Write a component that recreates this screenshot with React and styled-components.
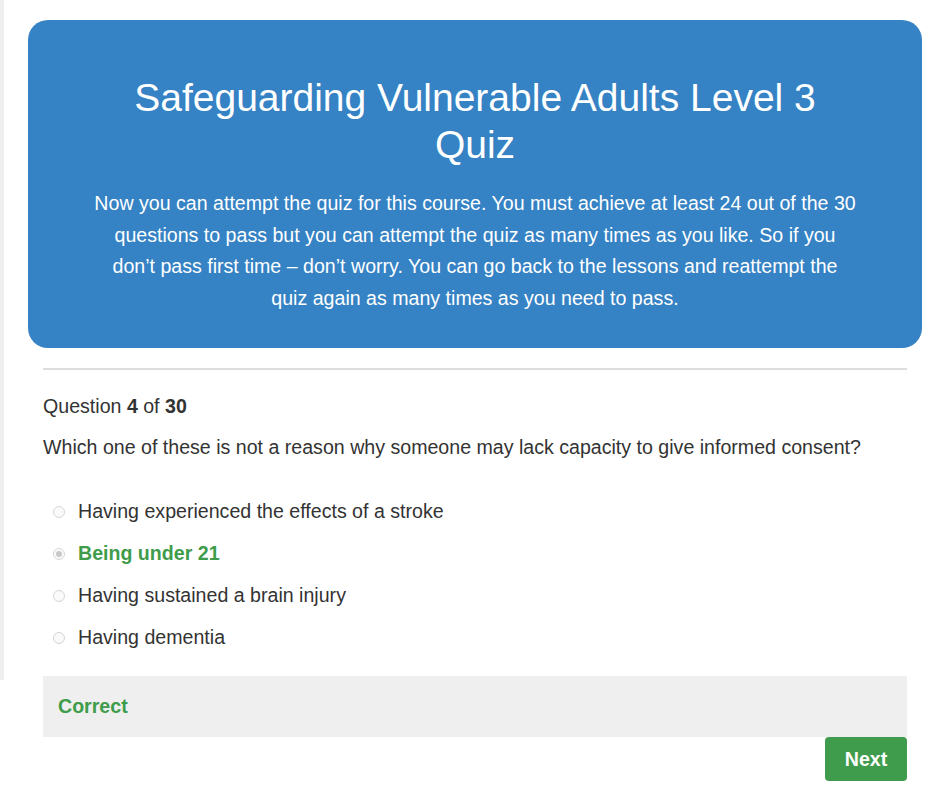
import React from 'react'
import styled, { createGlobalStyle } from 'styled-components'

const GlobalStyle = createGlobalStyle`
  html, body {
    margin: 0;
    padding: 0;
    background: #fff;
  }
  body {
    font-family: "Liberation Sans", Arial, sans-serif;
    color: #333;
  }
`

const Page = styled.div`
  display: flex;
  align-items: flex-start;
  width: 940px;
`

const SideEdge = styled.div`
  width: 4px;
  height: 680px;
  background: #efefef;
  flex-shrink: 0;
`

const Main = styled.div`
  width: 864px;
  margin-left: 39px;
  padding-top: 20px;
`

const Banner = styled.div`
  margin: 0 -15px;
  background: #3582c4;
  border-radius: 20px;
  color: #fff;
  text-align: center;
  padding: 54px 64px 33px;
`

const Title = styled.h1`
  margin: 0 0 20px;
  padding: 0 38px;
  font-size: 39px;
  line-height: 47px;
  font-weight: 400;
`

const Intro = styled.p`
  margin: 0;
  font-size: 19.6px;
  line-height: 31.7px;
`

const Divider = styled.hr`
  border: 0;
  height: 2px;
  background: #ddd;
  margin: 20px 0 0;
`

const Counter = styled.div`
  margin-top: 24px;
  font-size: 19.6px;
  line-height: 24px;
  b {
    font-weight: 700;
  }
`

const QuestionText = styled.div`
  margin-top: 17px;
  font-size: 19.6px;
  line-height: 24px;
`

const Options = styled.ul`
  list-style: none;
  margin: 32px 0 0;
  padding: 0 0 0 10px;
`

const Option = styled.li`
  display: flex;
  align-items: center;
  height: 42px;
  font-size: 19.6px;
  color: ${p => (p.correct ? '#3f9c4b' : '#333')};
  font-weight: ${p => (p.correct ? 700 : 400)};
`

const Radio = styled.span`
  width: 12px;
  height: 12px;
  border-radius: 50%;
  border: 1px solid #d6d6d6;
  background: #fafafa;
  margin-right: 13px;
  flex-shrink: 0;
  box-sizing: border-box;
  display: flex;
  align-items: center;
  justify-content: center;
  &::after {
    content: '';
    display: ${p => (p.checked ? 'block' : 'none')};
    width: 6px;
    height: 6px;
    border-radius: 50%;
    background: #c8c8c8;
  }
`

const Feedback = styled.div`
  margin-top: 17px;
  background: #efefef;
  height: 61px;
  display: flex;
  align-items: center;
  padding-left: 15px;
  color: #3f9c4b;
  font-weight: 700;
  font-size: 19.6px;
`

const Actions = styled.div`
  display: flex;
  justify-content: flex-end;
`

const NextButton = styled.button`
  background: #3f9c4c;
  color: #fff;
  border: 0;
  border-radius: 4px;
  width: 82px;
  height: 44px;
  padding: 2px 0 0;
  font-family: inherit;
  font-weight: 700;
  font-size: 19.6px;
  cursor: pointer;
`

const answers = [
  { text: 'Having experienced the effects of a stroke' },
  { text: 'Being under 21', correct: true },
  { text: 'Having sustained a brain injury' },
  { text: 'Having dementia' },
]

export default function App() {
  return (
    <>
      <GlobalStyle />
      <Page>
        <SideEdge />
        <Main>
          <Banner>
            <Title>Safeguarding Vulnerable Adults Level 3 Quiz</Title>
            <Intro>
              Now you can attempt the quiz for this course. You must achieve at least 24 out of the 30
              questions to pass but you can attempt the quiz as many times as you like. So if you
              don’t pass first time – don’t worry. You can go back to the lessons and reattempt the
              quiz again as many times as you need to pass.
            </Intro>
          </Banner>
          <Divider />
          <Counter>
            Question <b>4</b> of <b>30</b>
          </Counter>
          <QuestionText>
            Which one of these is not a reason why someone may lack capacity to give informed consent?
          </QuestionText>
          <Options>
            {answers.map(a => (
              <Option key={a.text} correct={a.correct}>
                <Radio checked={a.correct} />
                {a.text}
              </Option>
            ))}
          </Options>
          <Feedback>Correct</Feedback>
          <Actions>
            <NextButton>Next</NextButton>
          </Actions>
        </Main>
      </Page>
    </>
  )
}
